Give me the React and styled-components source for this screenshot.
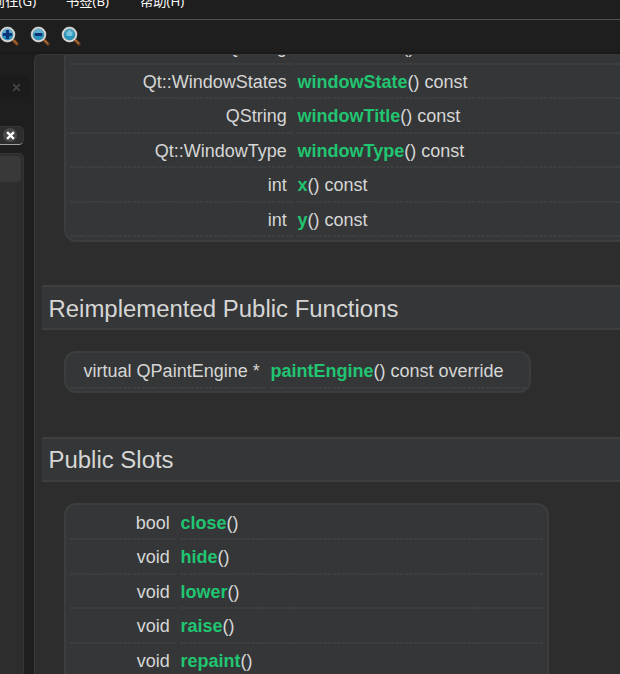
import React from "react";
import styled, { createGlobalStyle } from "styled-components";

const GlobalStyle = createGlobalStyle`
  body { margin: 0; background: #1e1e1e; overflow: hidden; }
  * { box-sizing: border-box; }
`;

const Window = styled.div`
  width: 620px;
  height: 674px;
  overflow: hidden;
  display: grid;
  grid-template-rows: 20px 34px 620px;
  background: #1e1e1e;
  color: #d6d6d6;
  font-family: "Liberation Sans", Arial, "Noto Sans CJK SC", sans-serif;
`;

const MenuBar = styled.nav`
  display: flex;
  height: 20px;
  overflow: hidden;
  border-bottom: 1px solid #505050;
`;

const MenuItem = styled.span`
  flex: none;
  width: 74px;
  margin-top: -9px;
  height: 20px;
  line-height: 20px;
  white-space: nowrap;
  color: #fff;
  font-family: "Open Sans", "Noto Sans CJK SC", sans-serif;
  font-size: 13.3px;

  &:first-child {
    margin-left: -8px;
  }
`;

const ToolBar = styled.div`
  display: flex;
  gap: 11px;
  padding: 6px 0 0;
  margin-left: -1px;
  border-bottom: 2px solid #1a1a1a;
`;

const ToolIcon = styled.svg`
  flex: none;
  width: 20px;
  height: 20px;
`;

const Body = styled.div`
  display: grid;
  grid-template-columns: 34px 586px;
  min-height: 0;
`;

const Sidebar = styled.aside`
  display: flex;
  flex-direction: column;
  width: 24px;
  padding-top: 22px;
`;

const DockTitle = styled.div`
  width: 29px;
  height: 21px;
  padding: 7px 0 0 12px;
  background: #1b1b1b;
  border-radius: 0 2px 2px 0;
  line-height: 0;
`;

const SearchField = styled.div`
  height: 19px;
  margin-top: 29px;
  padding: 1px 0 0 3px;
  background: #2d2d2d;
  border: 1px solid #353535;
  border-left: 0;
  border-bottom: 1px solid #a2a2a2;
  border-radius: 0 5px 5px 0;
  line-height: 0;
`;

const IndexList = styled.div`
  flex: 1;
  margin-top: 8px;
  padding: 2px 2px 0 0;
  background: #2d2d2d;
  border: 1px solid #353535;
  border-width: 1px 1px 0 0;
  border-radius: 0 5px 0 0;
`;

const SelectedEntry = styled.div`
  height: 26px;
  background: #393939;
  border-radius: 0 4px 4px 0;
`;

const Doc = styled.main`
  display: flex;
  flex-direction: column;
  align-items: flex-start;
  overflow: hidden;
  padding-left: 7px;
  background: #2d2d2d;
  border: 1px solid #383838;
  border-width: 1px 0 0 1px;
  border-radius: 6px 0 0 0;
`;

const Card = styled.div`
  flex: none;
  width: ${(p) => p.$width}px;
  height: ${(p) => p.$height}px;
  margin: ${(p) => p.$top}px 0 0 22px;
  padding: ${(p) => p.$pad}px 4px 0 4px;
  background: #353637;
  border: 2px solid #3b3d3e;
  border-radius: ${(p) => (p.$clipped ? "0 0 12px 12px" : "12px")};
  ${(p) => p.$clipped && "border-top: 0;"}
`;

const Row = styled.div`
  display: grid;
  grid-template-columns: ${(p) => p.$left}px minmax(0, 1fr);
  column-gap: 4px;
  height: 34.5px;
  font-size: 18px;
  line-height: 34px;
  white-space: pre;
`;

const Cell = styled.div`
  padding: ${(p) => (p.$type ? "0 5.8px 0 0" : "0 0 0 1px")};
  text-align: ${(p) => (p.$type ? "right" : "left")};
  background: repeating-linear-gradient(90deg, #3d3f40 0 3px, #373839 3px 4.5px) 0 100% / 100% 2px no-repeat;
`;

const Link = styled.b`
  color: #21c571;
`;

const Heading = styled.h2`
  flex: none;
  width: 578px;
  height: 45px;
  margin: ${(p) => p.$top}px 0 0;
  padding-left: 6.5px;
  background: #353637;
  border: 1px solid #3c3e3f;
  border-width: 2px 0;
  font-size: 23.95px;
  font-weight: 400;
  line-height: ${(p) => p.$line}px;
`;

const CloseMark = ({ size, color, width }) => (
  <svg width={size} height={size} viewBox="0 0 8 8">
    <path d="M1 1L7 7M7 1L1 7" stroke={color} strokeWidth={width} />
  </svg>
);

const ClearButton = styled.span`
  display: inline-flex;
  align-items: center;
  justify-content: center;
  width: 14px;
  height: 14px;
  border-radius: 50%;
  background: #4a4a4a;
`;

const Magnifier = ({ kind }) => (
  <ToolIcon viewBox="0 0 20 20">
    <path d="M14 14L18 18" stroke="#5b351d" strokeWidth="3.6" strokeLinecap="round" />
    <path d="M14.6 14.4L17.6 17.4" stroke="#a8672f" strokeWidth="2" strokeLinecap="round" />
    <circle cx="8.5" cy="8.5" r="6.7" fill="#2795bd" stroke="#85898c" strokeWidth="2.4" />
    <circle cx="8.5" cy="8.5" r="6.7" fill="none" stroke="#dedfdc" strokeWidth="1.5" />
    <path d="M3.4 7.6A5.1 5.1 0 0 1 13.6 7.6Z" fill="#70b5d2" opacity={kind === "reset" ? 0.4 : 0.8} />
    {kind === "in" && <path d="M8.5 4V13M4 8.5H13" stroke="#0c347b" strokeWidth="3.2" />}
    {kind === "out" && <path d="M4.8 8.5H12.2" stroke="#0c347b" strokeWidth="3" />}
    {kind === "reset" && <path d="M8.5 4L5.5 7V10H11.5V7Z" fill="#8ed0e2" opacity="0.8" />}
  </ToolIcon>
);

const members = [
  ["QString", "windowRole", "() const"],
  ["Qt::WindowStates", "windowState", "() const"],
  ["QString", "windowTitle", "() const"],
  ["Qt::WindowType", "windowType", "() const"],
  ["int", "x", "() const"],
  ["int", "y", "() const"],
];

const painting = [["virtual QPaintEngine *", "paintEngine", "() const override"]];

const slots = [
  ["bool", "close", "()"],
  ["void", "hide", "()"],
  ["void", "lower", "()"],
  ["void", "raise", "()"],
  ["void", "repaint", "()"],
];

const ScrolledRows = styled.div`
  margin-top: -25px;
`;

const Functions = ({ rows, left }) =>
  rows.map(([type, name, rest]) => (
    <Row key={name} $left={left}>
      <Cell $type>{type}</Cell>
      <Cell><Link>{name}</Link>{rest}</Cell>
    </Row>
  ));

export default function App() {
  return (
    <>
      <GlobalStyle />
      <Window>
        <MenuBar>
          <MenuItem>前往(G)</MenuItem>
          <MenuItem>书签(B)</MenuItem>
          <MenuItem>帮助(H)</MenuItem>
        </MenuBar>
        <ToolBar>
          <Magnifier kind="in" />
          <Magnifier kind="out" />
          <Magnifier kind="reset" />
        </ToolBar>
        <Body>
          <Sidebar>
            <DockTitle><CloseMark size={9} color="#444" width={1.6} /></DockTitle>
            <SearchField>
              <ClearButton><CloseMark size={9} color="#fff" width={2} /></ClearButton>
            </SearchField>
            <IndexList><SelectedEntry /></IndexList>
          </Sidebar>
          <Doc>
            <Card $width={600} $height={187} $top={0} $pad={0} $clipped>
              <ScrolledRows>
                <Functions rows={members} left={222.5} />
              </ScrolledRows>
            </Card>
            <Heading $top={43} $line={43}>Reimplemented Public Functions</Heading>
            <Card $width={467} $height={42} $top={21} $pad={1}>
              <Functions rows={painting} left={195.5} />
            </Card>
            <Heading $top={44} $line={41}>Public Slots</Heading>
            <Card $width={485} $height={220} $top={21} $pad={0.5}>
              <Functions rows={slots} left={105.5} />
            </Card>
          </Doc>
        </Body>
      </Window>
    </>
  );
}
